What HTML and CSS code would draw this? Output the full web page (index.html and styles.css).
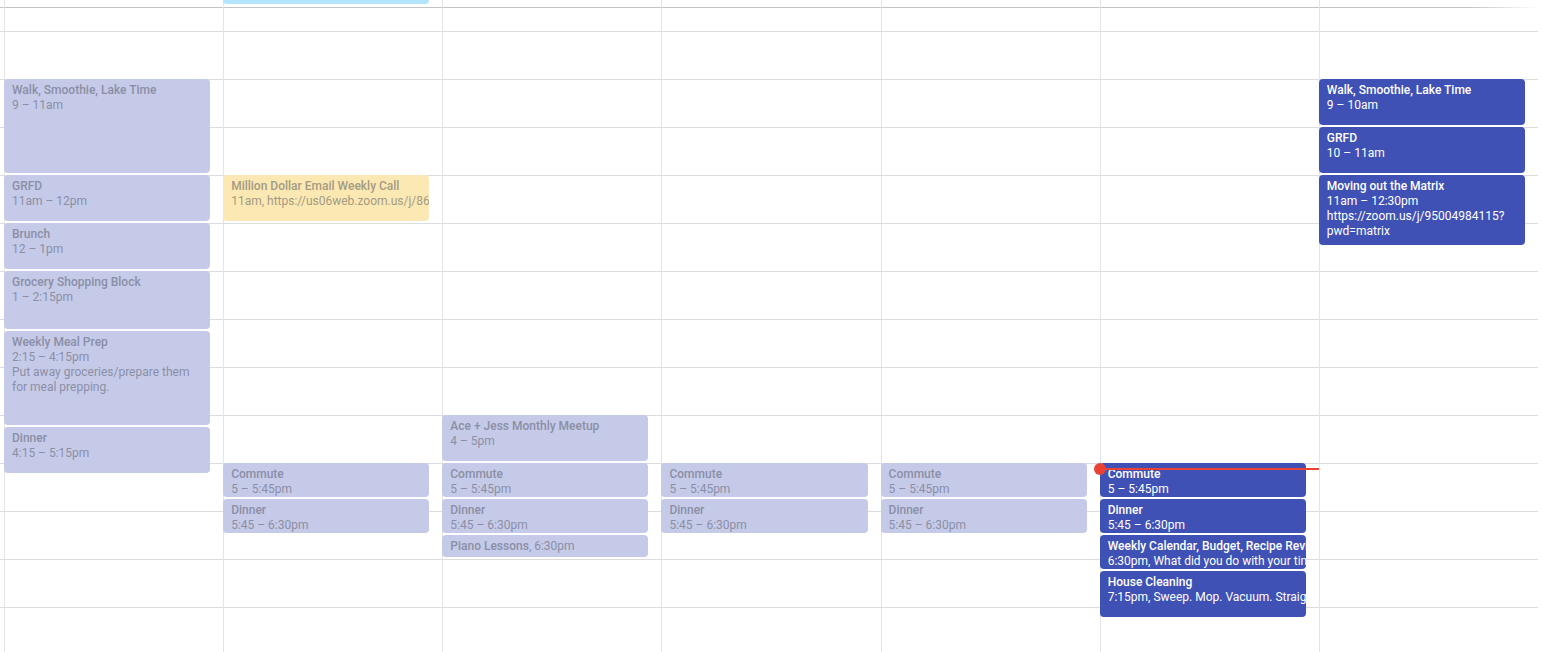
FILE: index.html
```html
<!DOCTYPE html>
<html lang="en">
<head>
<meta charset="utf-8">
<title>Week view</title>
<link rel="stylesheet" href="styles.css">
</head>
<body>
<div class="week">
  <div class="day">
    <div class="ev past" style="top:79px;height:94px"><div class="t">Walk, Smoothie, Lake Time</div><div>9 – 11am</div></div>
    <div class="ev past" style="top:175px;height:46px"><div class="t">GRFD</div><div>11am – 12pm</div></div>
    <div class="ev past" style="top:223px;height:46px"><div class="t">Brunch</div><div>12 – 1pm</div></div>
    <div class="ev past" style="top:271px;height:58px"><div class="t">Grocery Shopping Block</div><div>1 – 2:15pm</div></div>
    <div class="ev past" style="top:331px;height:94px"><div class="t">Weekly Meal Prep</div><div>2:15 – 4:15pm</div><div>Put away groceries/prepare them for meal prepping.</div></div>
    <div class="ev past" style="top:427px;height:46px"><div class="t">Dinner</div><div>4:15 – 5:15pm</div></div>
  </div>
  <div class="day">
    <div class="ev blue" style="top:-30px;height:34px"></div>
    <div class="ev yellow" style="top:175px;height:46px"><div class="t nw">Million Dollar Email Weekly Call</div><div class="nw">11am, https://us06web.zoom.us/j/86512345678</div></div>
    <div class="ev past" style="top:463px;height:34px"><div class="t">Commute</div><div>5 – 5:45pm</div></div>
    <div class="ev past" style="top:499px;height:34px"><div class="t">Dinner</div><div>5:45 – 6:30pm</div></div>
  </div>
  <div class="day">
    <div class="ev past" style="top:415px;height:46px"><div class="t">Ace + Jess Monthly Meetup</div><div>4 – 5pm</div></div>
    <div class="ev past" style="top:463px;height:34px"><div class="t">Commute</div><div>5 – 5:45pm</div></div>
    <div class="ev past" style="top:499px;height:34px"><div class="t">Dinner</div><div>5:45 – 6:30pm</div></div>
    <div class="ev past" style="top:535px;height:22px"><div class="nw"><span class="t">Piano Lessons</span>, 6:30pm</div></div>
  </div>
  <div class="day">
    <div class="ev past" style="top:463px;height:34px"><div class="t">Commute</div><div>5 – 5:45pm</div></div>
    <div class="ev past" style="top:499px;height:34px"><div class="t">Dinner</div><div>5:45 – 6:30pm</div></div>
  </div>
  <div class="day">
    <div class="ev past" style="top:463px;height:34px"><div class="t">Commute</div><div>5 – 5:45pm</div></div>
    <div class="ev past" style="top:499px;height:34px"><div class="t">Dinner</div><div>5:45 – 6:30pm</div></div>
  </div>
  <div class="day">
    <div class="ev dark" style="top:463px;height:34px"><div class="t">Commute</div><div>5 – 5:45pm</div></div>
    <div class="ev dark" style="top:499px;height:34px"><div class="t">Dinner</div><div>5:45 – 6:30pm</div></div>
    <div class="ev dark" style="top:535px;height:34px"><div class="t nw">Weekly Calendar, Budget, Recipe Review</div><div class="nw">6:30pm, What did you do with your time this week?</div></div>
    <div class="ev dark" style="top:571px;height:46px"><div class="t nw">House Cleaning</div><div class="nw">7:15pm, Sweep. Mop. Vacuum. Straighten up.</div></div>
    <div class="now"></div>
  </div>
  <div class="day">
    <div class="ev dark" style="top:79px;height:46px"><div class="t">Walk, Smoothie, Lake Time</div><div>9 – 10am</div></div>
    <div class="ev dark" style="top:127px;height:46px"><div class="t">GRFD</div><div>10 – 11am</div></div>
    <div class="ev dark" style="top:175px;height:70px"><div class="t">Moving out the Matrix</div><div>11am – 12:30pm</div><div>https://zoom.us/j/95004984115?<wbr>pwd=matrix</div></div>
  </div>
</div>
</body>
</html>
```

FILE: styles.css
```css
html, body {
  margin: 0;
  padding: 0;
  background: #ffffff;
}

body {
  font-family: Roboto, "Liberation Sans", Arial, sans-serif;
  overflow: hidden;
}

.week {
  width: 1538px;
  height: 652px;
  box-sizing: border-box;
  padding-left: 4px;
  display: grid;
  grid-template-columns: repeat(7, minmax(0, 1fr));
  overflow: hidden;
  background:
    linear-gradient(to right, #c4c4c4 0, #c4c4c4 1470px, rgba(196, 196, 196, 0) 1538px) 0 7px / 1538px 1px no-repeat,
    linear-gradient(#dadce0 0, #dadce0 1px, transparent 1px) 0 31px / 1538px 48px repeat-y;
}

.day {
  position: relative;
  border-left: 1px solid #e3e3e3;
}

.ev {
  position: absolute;
  left: -1px;
  right: 13px;
  box-sizing: border-box;
  border-radius: 4px;
  padding: 4px 8px 0;
  font-size: 12px;
  line-height: 15px;
  overflow: hidden;
}

.t {
  font-weight: 500;
}

.nw {
  white-space: nowrap;
}

.past {
  background: #c5cae9;
  color: #8b8fa5;
}

.dark {
  background: #3f51b5;
  color: #ffffff;
}

.yellow {
  background: #fce8b2;
  color: #a39b84;
}

.blue {
  background: #b3e5fc;
}

.now {
  position: absolute;
  left: -1px;
  right: 0;
  top: 468px;
  height: 2px;
  background: #ea4335;
  z-index: 2;
}

.now::before {
  content: "";
  position: absolute;
  left: -6px;
  top: -5px;
  width: 12px;
  height: 12px;
  border-radius: 50%;
  background: #ea4335;
}
```
